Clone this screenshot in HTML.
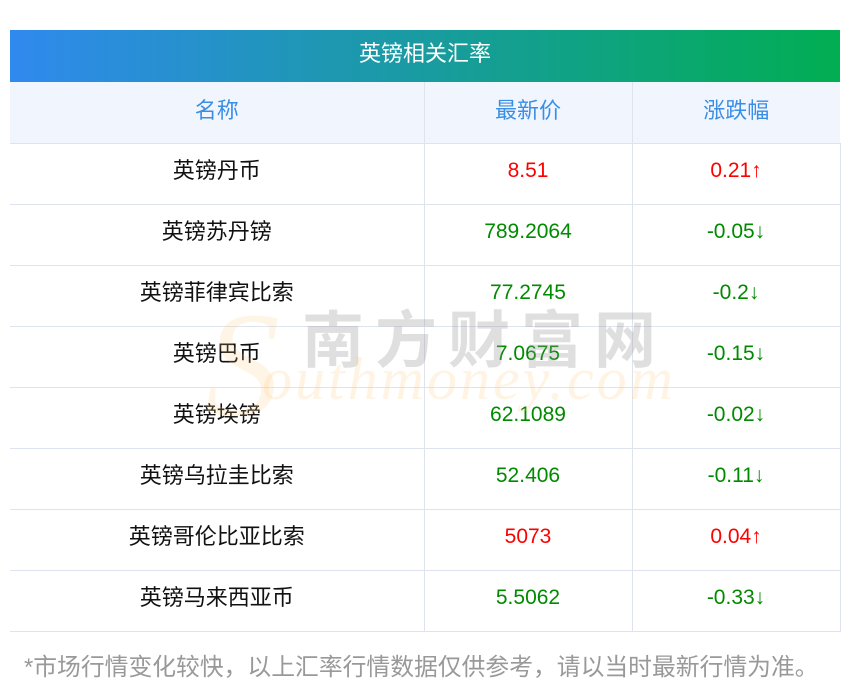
<!DOCTYPE html>
<html><head><meta charset="utf-8"><style>
body{margin:0;background:#fff;width:850px;height:697px;overflow:hidden;position:relative;font-family:"Liberation Sans","Noto Sans CJK SC",sans-serif}
.t{position:absolute;left:10px;top:30px;width:830px}
.title{height:52px;background:linear-gradient(90deg,#3089ee,#01ae52);color:#fff;font-size:22px;text-align:center;line-height:47px}
table{border-collapse:collapse;width:830px;table-layout:fixed}
td{height:61px;box-sizing:border-box;border:1px solid #dfe3ee;text-align:center;font-size:21px;padding:0 0 6px 0;color:#111;line-height:24px}
td:first-child{font-size:22px;border-left:none}
th{height:61px;box-sizing:border-box;padding:0 0 6px 0;background:#f1f6fe;color:#3a8ee6;font-weight:normal;font-size:22px;border:1px solid #dfe3ee;border-top:none;border-left:none}
tr th:last-child{border-right:none}
.r{color:#f00}.g{color:#008a00}
.foot{position:absolute;left:24px;top:647px;font-size:23.8px;color:#999;white-space:nowrap}
.wm1{position:absolute;left:302px;top:290px;font-size:62px;color:rgba(150,150,150,.3);letter-spacing:11px;font-family:"Noto Sans CJK SC",sans-serif;font-weight:bold}
.wm2{position:absolute;left:262px;top:345px;font-size:60px;color:rgba(255,200,120,.2);font-style:italic;font-family:"Liberation Serif",serif;letter-spacing:3px}
.wm3{position:absolute;left:205px;top:290px;font-size:150px;color:rgba(255,200,120,.18);font-style:italic;font-family:"Liberation Serif",serif;line-height:1}
</style></head><body>
<div class="t">
<div class="title">英镑相关汇率</div>
<table>
<colgroup><col style="width:414px"><col style="width:208px"><col style="width:208px"></colgroup>
<tr><th>名称</th><th>最新价</th><th>涨跌幅</th></tr>
<tr><td>英镑丹币</td><td class="r">8.51</td><td class="r">0.21↑</td></tr>
<tr><td>英镑苏丹镑</td><td class="g">789.2064</td><td class="g">-0.05↓</td></tr>
<tr><td>英镑菲律宾比索</td><td class="g">77.2745</td><td class="g">-0.2↓</td></tr>
<tr><td>英镑巴币</td><td class="g">7.0675</td><td class="g">-0.15↓</td></tr>
<tr><td>英镑埃镑</td><td class="g">62.1089</td><td class="g">-0.02↓</td></tr>
<tr><td>英镑乌拉圭比索</td><td class="g">52.406</td><td class="g">-0.11↓</td></tr>
<tr><td>英镑哥伦比亚比索</td><td class="r">5073</td><td class="r">0.04↑</td></tr>
<tr><td>英镑马来西亚币</td><td class="g">5.5062</td><td class="g">-0.33↓</td></tr>
</table>
</div>
<div class="wm3">S</div>
<div class="wm1">南方财富网</div>
<div class="wm2">outhmoney.com</div>
<div class="foot">*市场行情变化较快，以上汇率行情数据仅供参考，请以当时最新行情为准。</div>
</body></html>
